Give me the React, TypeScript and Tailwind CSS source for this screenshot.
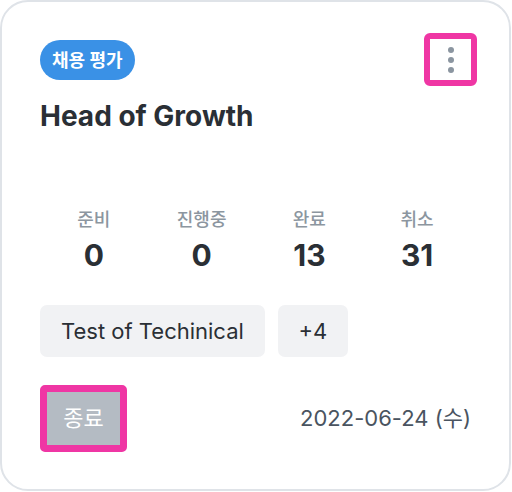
const stats = [
    { label: "준비", value: 0 },
    { label: "진행중", value: 0 },
    { label: "완료", value: 13 },
    { label: "취소", value: 31 },
];

const font = { fontFamily: "Inter, 'Noto Sans CJK KR', sans-serif" };

export default function App() {
    return (
        <div className="w-[512px] h-[492px] bg-white" style={font}>
            <div className="w-[511px] h-[491px] rounded-[28px] border-2 border-[#dfe3e8] bg-white px-[38px] pt-[38px] flex flex-col">
                <div className="flex items-start justify-between">
                    <span className="h-[40px] px-[12px] rounded-full bg-[#3a91e6] text-white text-[18px] font-bold flex items-center">
                        채용 평가
                    </span>
                    <button className="w-[53px] h-[53px] -mt-[7px] -mr-[6px] border-[6px] border-[#ef36a4] rounded-[6px] flex flex-col items-center justify-center gap-[4px]">
                        <span className="w-[6px] h-[6px] rounded-full bg-[#8b95a0]" />
                        <span className="w-[6px] h-[6px] rounded-full bg-[#8b95a0]" />
                        <span className="w-[6px] h-[6px] rounded-full bg-[#8b95a0]" />
                    </button>
                </div>
                <h2 className="mt-[13px] text-[28px] leading-[34px] font-bold text-[#2a2f35]">Head of Growth</h2>

                <div className="mt-[74px] grid grid-cols-4">
                    {stats.map((s) => (
                        <div key={s.label} className="flex flex-col items-center">
                            <span className="text-[18px] leading-[26px] font-medium text-[#8c96a0]">{s.label}</span>
                            <span className="mt-[4px] text-[30px] leading-[36px] font-bold text-[#2a2f35]">{s.value}</span>
                        </div>
                    ))}
                </div>

                <div className="mt-[32px] flex gap-[13px]">
                    <span className="h-[52px] px-[21px] rounded-[7px] bg-[#f1f2f4] text-[22px] text-[#2a2f35] flex items-center">
                        Test of Techinical
                    </span>
                    <span className="h-[52px] w-[70px] rounded-[7px] bg-[#f1f2f4] text-[22px] text-[#2a2f35] flex items-center justify-center">
                        +4
                    </span>
                </div>

                <div className="mt-[28px] flex items-center justify-between">
                    <span className="w-[87px] h-[67px] border-[7px] border-[#ef36a4] rounded-[5px] bg-[#b4bbc3] text-white text-[22px] flex items-center justify-center">
                        종료
                    </span>
                    <span className="text-[22px] text-[#4a5460]">2022-06-24 (수)</span>
                </div>
            </div>
        </div>
    );
}
